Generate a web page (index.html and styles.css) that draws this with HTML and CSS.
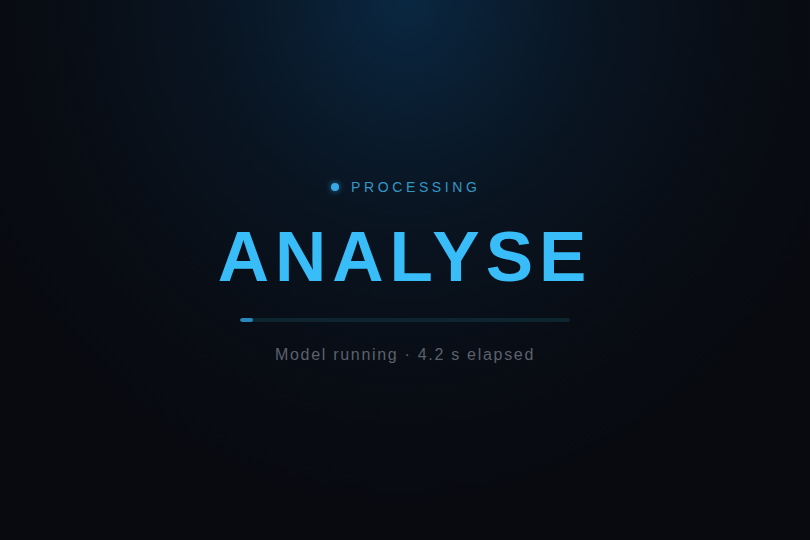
FILE: index.html
```html
<!DOCTYPE html>
<html lang="en">
<head>
<meta charset="utf-8">
<title>Analyse</title>
<link rel="stylesheet" href="styles.css">
</head>
<body>
<main class="stage">
  <div class="status">
    <span class="dot"></span>
    <span class="status-label">PROCESSING</span>
  </div>
  <h1 class="title">ANALYSE</h1>
  <div class="progress"><div class="progress-fill" style="width: 4%"></div></div>
  <p class="meta">Model running · 4.2 s elapsed</p>
</main>
</body>
</html>
```
FILE: styles.css
```css
html, body {
  margin: 0;
  padding: 0;
  height: 100%;
}
body {
  background: #080a10;
  font-family: "Liberation Sans", Arial, sans-serif;
}
.stage {
  box-sizing: border-box;
  height: 100%;
  padding-top: 179px;
  display: flex;
  flex-direction: column;
  align-items: center;
  background:
    radial-gradient(ellipse 58% 95% at 50% 0%, rgba(10, 42, 70, 0.9) 0%, rgba(10, 28, 46, 0.6) 40%, rgba(9, 16, 26, 0.3) 78%, rgba(8, 10, 16, 0) 100%),
    #080a10;
}
.status {
  display: flex;
  align-items: center;
  gap: 12px;
  height: 16px;
  margin-left: -2px;
}
.dot {
  width: 8px;
  height: 8px;
  border-radius: 50%;
  background: #38a9e6;
  box-shadow: 0 0 6px rgba(56, 169, 230, 0.7);
}
.status-label {
  font-size: 14px;
  line-height: 16px;
  letter-spacing: 3.6px;
  color: #3596c6;
  margin-right: -3.6px;
}
.title {
  margin: 22px 0 0;
  font-size: 71px;
  font-weight: 700;
  line-height: 80px;
  letter-spacing: 6px;
  color: #38bdf8;
}
.progress {
  width: 330px;
  height: 4px;
  border-radius: 2px;
  background: #0e2530;
  margin-top: 21px;
  overflow: hidden;
}
.progress-fill {
  height: 100%;
  border-radius: 2px;
  background: #2b86b8;
}
.meta {
  margin: 23px 0 0;
  font-size: 16px;
  line-height: 20px;
  letter-spacing: 1.7px;
  color: #5b616c;
}
```
